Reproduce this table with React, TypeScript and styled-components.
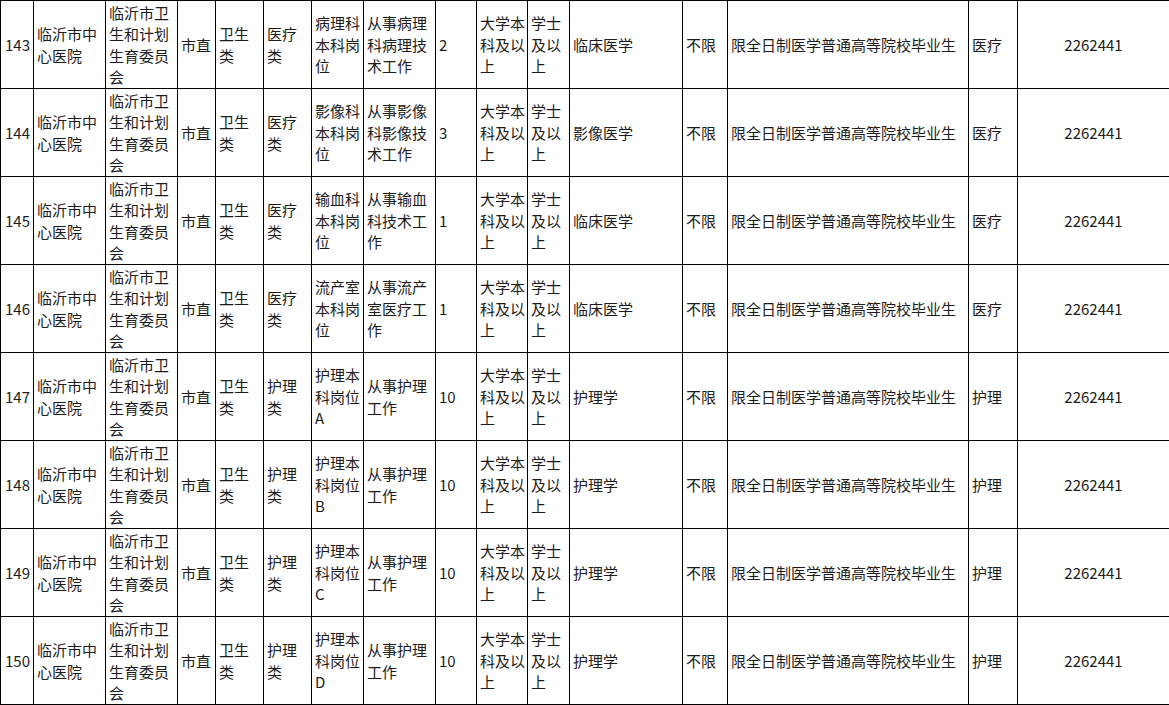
import React from "react";
import styled, { createGlobalStyle } from "styled-components";

const GlobalStyle = createGlobalStyle`
  html, body { margin: 0; padding: 0; background: #ffffff; }
  body {
    font-family: "Noto Sans CJK SC", "Noto Sans", sans-serif;
    color: #1c1c1c;
  }
`;

const Table = styled.table`
  width: 1169px;
  table-layout: fixed;
  border-collapse: collapse;
  font-size: 15px;
  line-height: 21.5px;
`;

const Row = styled.tr`
  height: 88px;
`;

const Cell = styled.td<{ $align?: "left" | "center"; $pad?: number }>`
  border: 1px solid #000;
  padding: 0 ${(p) => p.$pad ?? 3}px;
  vertical-align: middle;
  text-align: ${(p) => p.$align ?? "left"};
  white-space: nowrap;
  overflow: hidden;
`;

const widths = [33, 72, 72, 38, 48, 48, 52, 72, 41, 51, 42, 113, 45, 241, 49, 152];

type Rec = {
  no: string;
  post: string[];
  work: string[];
  count: string;
  major: string;
  type: string;
  cat: string[];
};

const rows: Rec[] = [
  { no: "143", post: ["病理科", "本科岗", "位"], work: ["从事病理", "科病理技", "术工作"], count: "2", major: "临床医学", type: "医疗", cat: ["医疗", "类"] },
  { no: "144", post: ["影像科", "本科岗", "位"], work: ["从事影像", "科影像技", "术工作"], count: "3", major: "影像医学", type: "医疗", cat: ["医疗", "类"] },
  { no: "145", post: ["输血科", "本科岗", "位"], work: ["从事输血", "科技术工", "作"], count: "1", major: "临床医学", type: "医疗", cat: ["医疗", "类"] },
  { no: "146", post: ["流产室", "本科岗", "位"], work: ["从事流产", "室医疗工", "作"], count: "1", major: "临床医学", type: "医疗", cat: ["医疗", "类"] },
  { no: "147", post: ["护理本", "科岗位", "A"], work: ["从事护理", "工作"], count: "10", major: "护理学", type: "护理", cat: ["护理", "类"] },
  { no: "148", post: ["护理本", "科岗位", "B"], work: ["从事护理", "工作"], count: "10", major: "护理学", type: "护理", cat: ["护理", "类"] },
  { no: "149", post: ["护理本", "科岗位", "C"], work: ["从事护理", "工作"], count: "10", major: "护理学", type: "护理", cat: ["护理", "类"] },
  { no: "150", post: ["护理本", "科岗位", "D"], work: ["从事护理", "工作"], count: "10", major: "护理学", type: "护理", cat: ["护理", "类"] },
];

const Lines: React.FC<{ items: string[] }> = ({ items }) => (
  <>
    {items.map((t, i) => (
      <React.Fragment key={i}>
        {i > 0 && <br />}
        {t}
      </React.Fragment>
    ))}
  </>
);

export default function App() {
  return (
    <>
      <GlobalStyle />
      <Table>
        <colgroup>
          {widths.map((w, i) => (
            <col key={i} style={{ width: w }} />
          ))}
        </colgroup>
        <tbody>
          {rows.map((r) => (
            <Row key={r.no}>
              <Cell $pad={4}>{r.no}</Cell>
              <Cell>
                <Lines items={["临沂市中", "心医院"]} />
              </Cell>
              <Cell>
                <Lines items={["临沂市卫", "生和计划", "生育委员", "会"]} />
              </Cell>
              <Cell>市直</Cell>
              <Cell>
                <Lines items={["卫生", "类"]} />
              </Cell>
              <Cell>
                <Lines items={r.cat} />
              </Cell>
              <Cell>
                <Lines items={r.post} />
              </Cell>
              <Cell>
                <Lines items={r.work} />
              </Cell>
              <Cell>{r.count}</Cell>
              <Cell>
                <Lines items={["大学本", "科及以", "上"]} />
              </Cell>
              <Cell>
                <Lines items={["学士", "及以", "上"]} />
              </Cell>
              <Cell>{r.major}</Cell>
              <Cell>不限</Cell>
              <Cell>限全日制医学普通高等院校毕业生</Cell>
              <Cell>{r.type}</Cell>
              <Cell $align="center">2262441</Cell>
            </Row>
          ))}
        </tbody>
      </Table>
    </>
  );
}
